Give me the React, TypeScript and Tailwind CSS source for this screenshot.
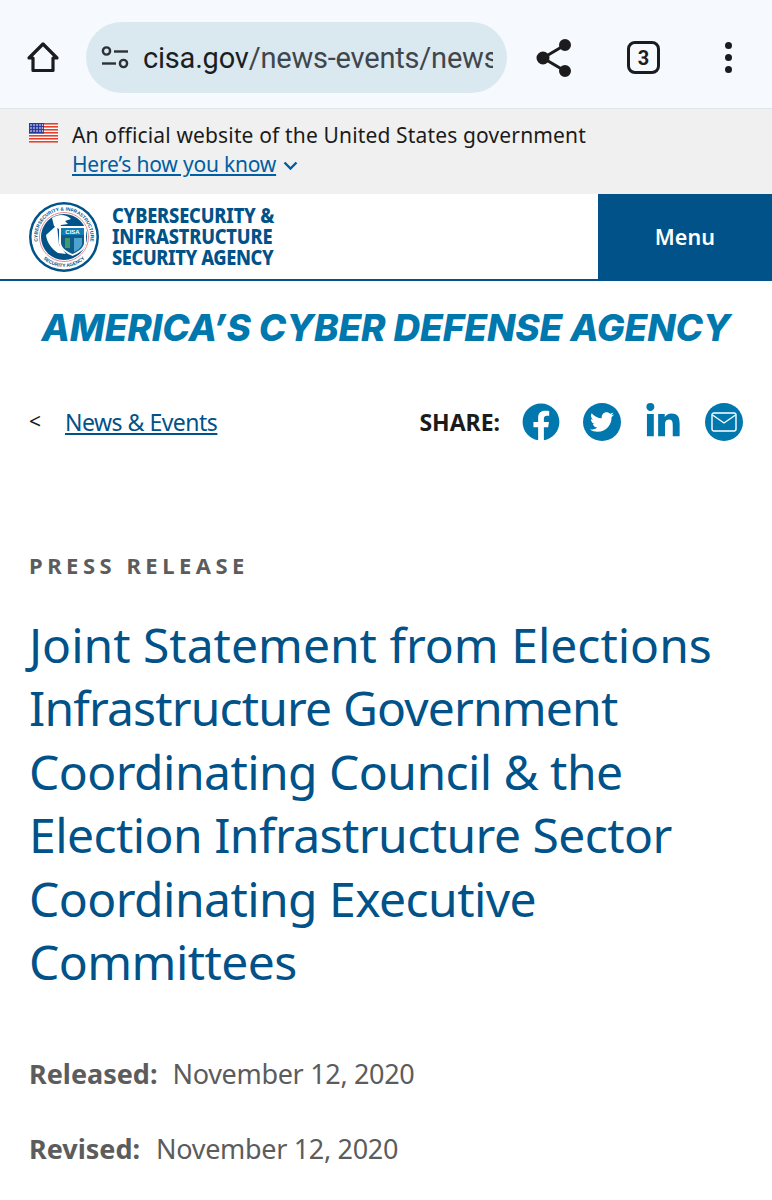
import { FaFacebook, FaLinkedinIn, FaTwitter } from "react-icons/fa";

const sans = "font-['Noto_Sans','Open_Sans',sans-serif]";

function BrowserBar() {
  return (
    <div className="flex h-[109px] items-center border-b border-[#dde4ea] bg-[#f6f9fe] pt-[7px]">
      <div className="flex w-[86px] justify-center">
        <svg width="34" height="34" viewBox="0 0 34 34" fill="none" stroke="#1c1c1f" strokeWidth="3.2" strokeLinejoin="round">
          <path d="M17 3 L31 17 H27 V29.5 H7 V17 H3 Z" />
        </svg>
      </div>
      <div className="flex h-[71px] w-[421px] items-center rounded-full bg-[#dae8f0] pl-[15px]">
        <svg width="28" height="24" viewBox="0 0 28 24" fill="none" stroke="#2c3136" strokeWidth="2.4" className="shrink-0">
          <circle cx="5.5" cy="5" r="3.6" />
          <path d="M13 5.5 H27" />
          <path d="M1 17.5 H15" />
          <circle cx="22.5" cy="17.5" r="3.6" />
        </svg>
        <div className="ml-[14px] mt-[3px] w-[350px] overflow-hidden whitespace-nowrap font-['Roboto',sans-serif] text-[29px] tracking-[-0.2px] text-[#40464b]">
          <span className="text-[#1b1f23]">cisa.gov</span>/news-events/news
        </div>
      </div>
      <div className="flex w-[94px] justify-center">
        <svg width="36" height="38" viewBox="0 0 36 38" fill="#1c1c1f" stroke="#1c1c1f" strokeWidth="3">
          <circle cx="29" cy="6" r="4.5" />
          <circle cx="7" cy="19" r="5" />
          <circle cx="29" cy="32" r="4.5" />
          <path d="M29 6 L7 19 L29 32" fill="none" />
        </svg>
      </div>
      <div className="flex w-[85px] justify-center">
        <div className="flex h-[33px] w-[33px] items-center justify-center rounded-[8px] border-[3px] border-[#1c1c1f] font-['Roboto',sans-serif] text-[20px] font-bold text-[#1c1c1f]">
          3
        </div>
      </div>
      <div className="flex flex-1 flex-col items-center gap-[5px] pr-[2px]">
        <span className="h-[7px] w-[7px] rounded-full bg-[#1c1c1f]" />
        <span className="h-[7px] w-[7px] rounded-full bg-[#1c1c1f]" />
        <span className="h-[7px] w-[7px] rounded-full bg-[#1c1c1f]" />
      </div>
    </div>
  );
}

function Flag() {
  return (
    <svg width="29" height="20" viewBox="0 0 29 20" className="mt-[3px] shrink-0">
      <rect width="29" height="20" fill="#fff" />
      {[0, 3, 6, 9, 12, 15, 18].map((y) => (
        <rect key={y} y={y} width="29" height="1.6" fill="#e2412f" />
      ))}
      <rect width="15" height="10.5" fill="#2a3a9c" />
      {[2, 5, 8].map((y) =>
        [2, 5, 8, 11, 13.5].map((x) => <circle key={`${x}-${y}`} cx={x} cy={y} r="0.8" fill="#fff" />),
      )}
    </svg>
  );
}

function GovBanner() {
  return (
    <div className={`flex h-[85px] gap-[14px] bg-[#f0f0f0] pl-[29px] pt-[11px] ${sans}`}>
      <Flag />
      <div>
        <p className="text-[21px] leading-[30px] tracking-[0.15px] text-[#1b1b1b]">An official website of the United States government</p>
        <p className="flex items-center gap-[7px] text-[21px] leading-[28px] tracking-[-0.2px] text-[#005ea2]">
          <span className="underline underline-offset-2">Here’s how you know</span>
          <svg width="15" height="10" viewBox="0 0 15 10" fill="none" stroke="#005ea2" strokeWidth="2.4" className="mt-[3px]">
            <path d="M1.5 1.5 L7.5 7.5 L13.5 1.5" />
          </svg>
        </p>
      </div>
    </div>
  );
}

function Seal() {
  return (
    <svg width="72" height="72" viewBox="0 0 72 72" className="shrink-0">
      <defs>
        <path id="sealTop" d="M14.3 51.2 A26.5 26.5 0 1 1 57.7 51.2" />
        <path id="sealBottom" d="M10 51 A30 30 0 0 0 62 51" />
      </defs>
      <circle cx="36" cy="36" r="35" fill="#005288" />
      <circle cx="36" cy="36" r="32.5" fill="#fff" />
      <circle cx="36" cy="36" r="24.5" fill="#fff" stroke="#e58a94" strokeWidth="1" />
      <circle cx="36" cy="36" r="23" fill="#005288" />
      <text fontSize="4.8" fontWeight="700" fill="#005288" fontFamily="Liberation Sans, sans-serif">
        <textPath href="#sealTop" startOffset="50%" textAnchor="middle">CYBERSECURITY &amp; INFRASTRUCTURE</textPath>
      </text>
      <text fontSize="4.8" fontWeight="700" fill="#005288" fontFamily="Liberation Sans, sans-serif">
        <textPath href="#sealBottom" startOffset="50%" textAnchor="middle">SECURITY AGENCY</textPath>
      </text>
      <path d="M24 17 C30 13 38 13 43 18 L37 20 L40 23 L33 24 L31 28 L26 25 Z" fill="#fff" />
      <path d="M18 34 L29 24 L31 44 L38 53 L30 52 C24 48 19 42 18 34 Z" fill="#fff" />
      <path d="M31 25 H58 V42 C58 48 50 53 44.5 55 C39 53 31 48 31 42 Z" fill="#fff" />
      <path d="M33 27 H56 V34 H33 Z" fill="#0f7fb5" />
      <path d="M33 34 H56 V42 C56 47 49 51 44.5 53 C40 51 33 47 33 42 Z" fill="#0d5c8a" />
      <path d="M46 37 H54 V43 C54 46 50 49 46 51 Z" fill="#4da3cf" />
      <path d="M37 37 H42 V47 H37 Z" fill="#3f9a6b" />
      <text x="44.5" y="32.6" fontSize="6" fontWeight="700" fill="#fff" textAnchor="middle" fontFamily="Liberation Sans, sans-serif">CISA</text>
    </svg>
  );
}

function SiteHeader() {
  return (
    <div className="flex h-[87px] border-b-2 border-[#005288] bg-white">
      <div className="flex flex-1 items-center gap-[12px] pl-[28px]">
        <Seal />
        <div className={`origin-left scale-x-[0.89] whitespace-nowrap ${sans} text-[20.5px] font-extrabold leading-[21px] tracking-[-0.2px] text-[#005288]`}>
          <div>CYBERSECURITY &amp;</div>
          <div>INFRASTRUCTURE</div>
          <div className="tracking-[-0.45px]">SECURITY AGENCY</div>
        </div>
      </div>
      <div className={`flex w-[174px] items-center justify-center bg-[#005288] pt-[1px] text-[21.5px] font-semibold text-white ${sans} tracking-[0.1px]`}>
        Menu
      </div>
    </div>
  );
}

function ShareRow() {
  return (
    <div className={`mt-[46px] flex h-[46px] items-center pl-[29px] pr-[29px] ${sans}`}>
      <span className="text-[21px] text-[#1b1b1b]">&lt;</span>
      <a className="ml-[24px] text-[23px] tracking-[-0.5px] text-[#005288] underline underline-offset-2">News &amp; Events</a>
      <span className="ml-auto text-[23px] font-bold text-[#1b1b1b]">SHARE:</span>
      <div className="ml-[22px] flex items-center text-[#0078ae]">
        <FaFacebook size={38} />
        <span className="ml-[23px] flex h-[38px] w-[38px] items-center justify-center rounded-full bg-[#0078ae] text-white">
          <FaTwitter size={24} />
        </span>
        <span className="ml-[23px]">
          <FaLinkedinIn size={38} />
        </span>
        <span className="ml-[23px] flex h-[38px] w-[38px] items-center justify-center rounded-full bg-[#0078ae]">
          <svg width="26" height="20" viewBox="0 0 26 20" fill="none" stroke="#fff" strokeWidth="1.4">
            <rect x="1" y="1" width="24" height="18" rx="2" />
            <path d="M1.5 3 L13 11 L24.5 3" />
          </svg>
        </span>
      </div>
    </div>
  );
}

export default function App() {
  return (
    <div className="h-[1200px] w-[772px] overflow-hidden bg-white">
      <BrowserBar />
      <GovBanner />
      <SiteHeader />
      <p className="mt-[22px] text-center font-['Inter',sans-serif] text-[37px] font-extrabold italic leading-[50px] tracking-[-0.13px] text-[#0078ae]">
        AMERICA’S CYBER DEFENSE AGENCY
      </p>
      <ShareRow />
      <div className={`pl-[29px] pr-[29px] ${sans}`}>
        <p className="mt-[105px] text-[22px] font-bold leading-[30px] tracking-[4.5px] text-[#5c5c5c]">PRESS RELEASE</p>
        <h1 className="mt-[33px] text-[48px] font-normal leading-[63.4px] tracking-[-0.55px] text-[#005288]">
          <span className="block tracking-normal">Joint Statement from Elections</span>
          <span className="block tracking-[-0.84px]">Infrastructure Government</span>
          <span className="block">Coordinating Council &amp; the</span>
          <span className="block">Election Infrastructure Sector</span>
          <span className="block">Coordinating Executive</span>
          <span className="block">Committees</span>
        </h1>
        <div className="mt-[61px] flex items-baseline text-[27px] leading-[40px] tracking-[-0.32px] text-[#5c5c5c]">
          <span className="font-bold tracking-normal">Released:</span>
          <span className="ml-[15px]">November 12, 2020</span>
        </div>
        <div className="mt-[35px] flex items-baseline text-[27px] leading-[40px] tracking-[-0.32px] text-[#5c5c5c]">
          <span className="font-bold tracking-normal">Revised:</span>
          <span className="ml-[16px]">November 12, 2020</span>
        </div>
      </div>
    </div>
  );
}
